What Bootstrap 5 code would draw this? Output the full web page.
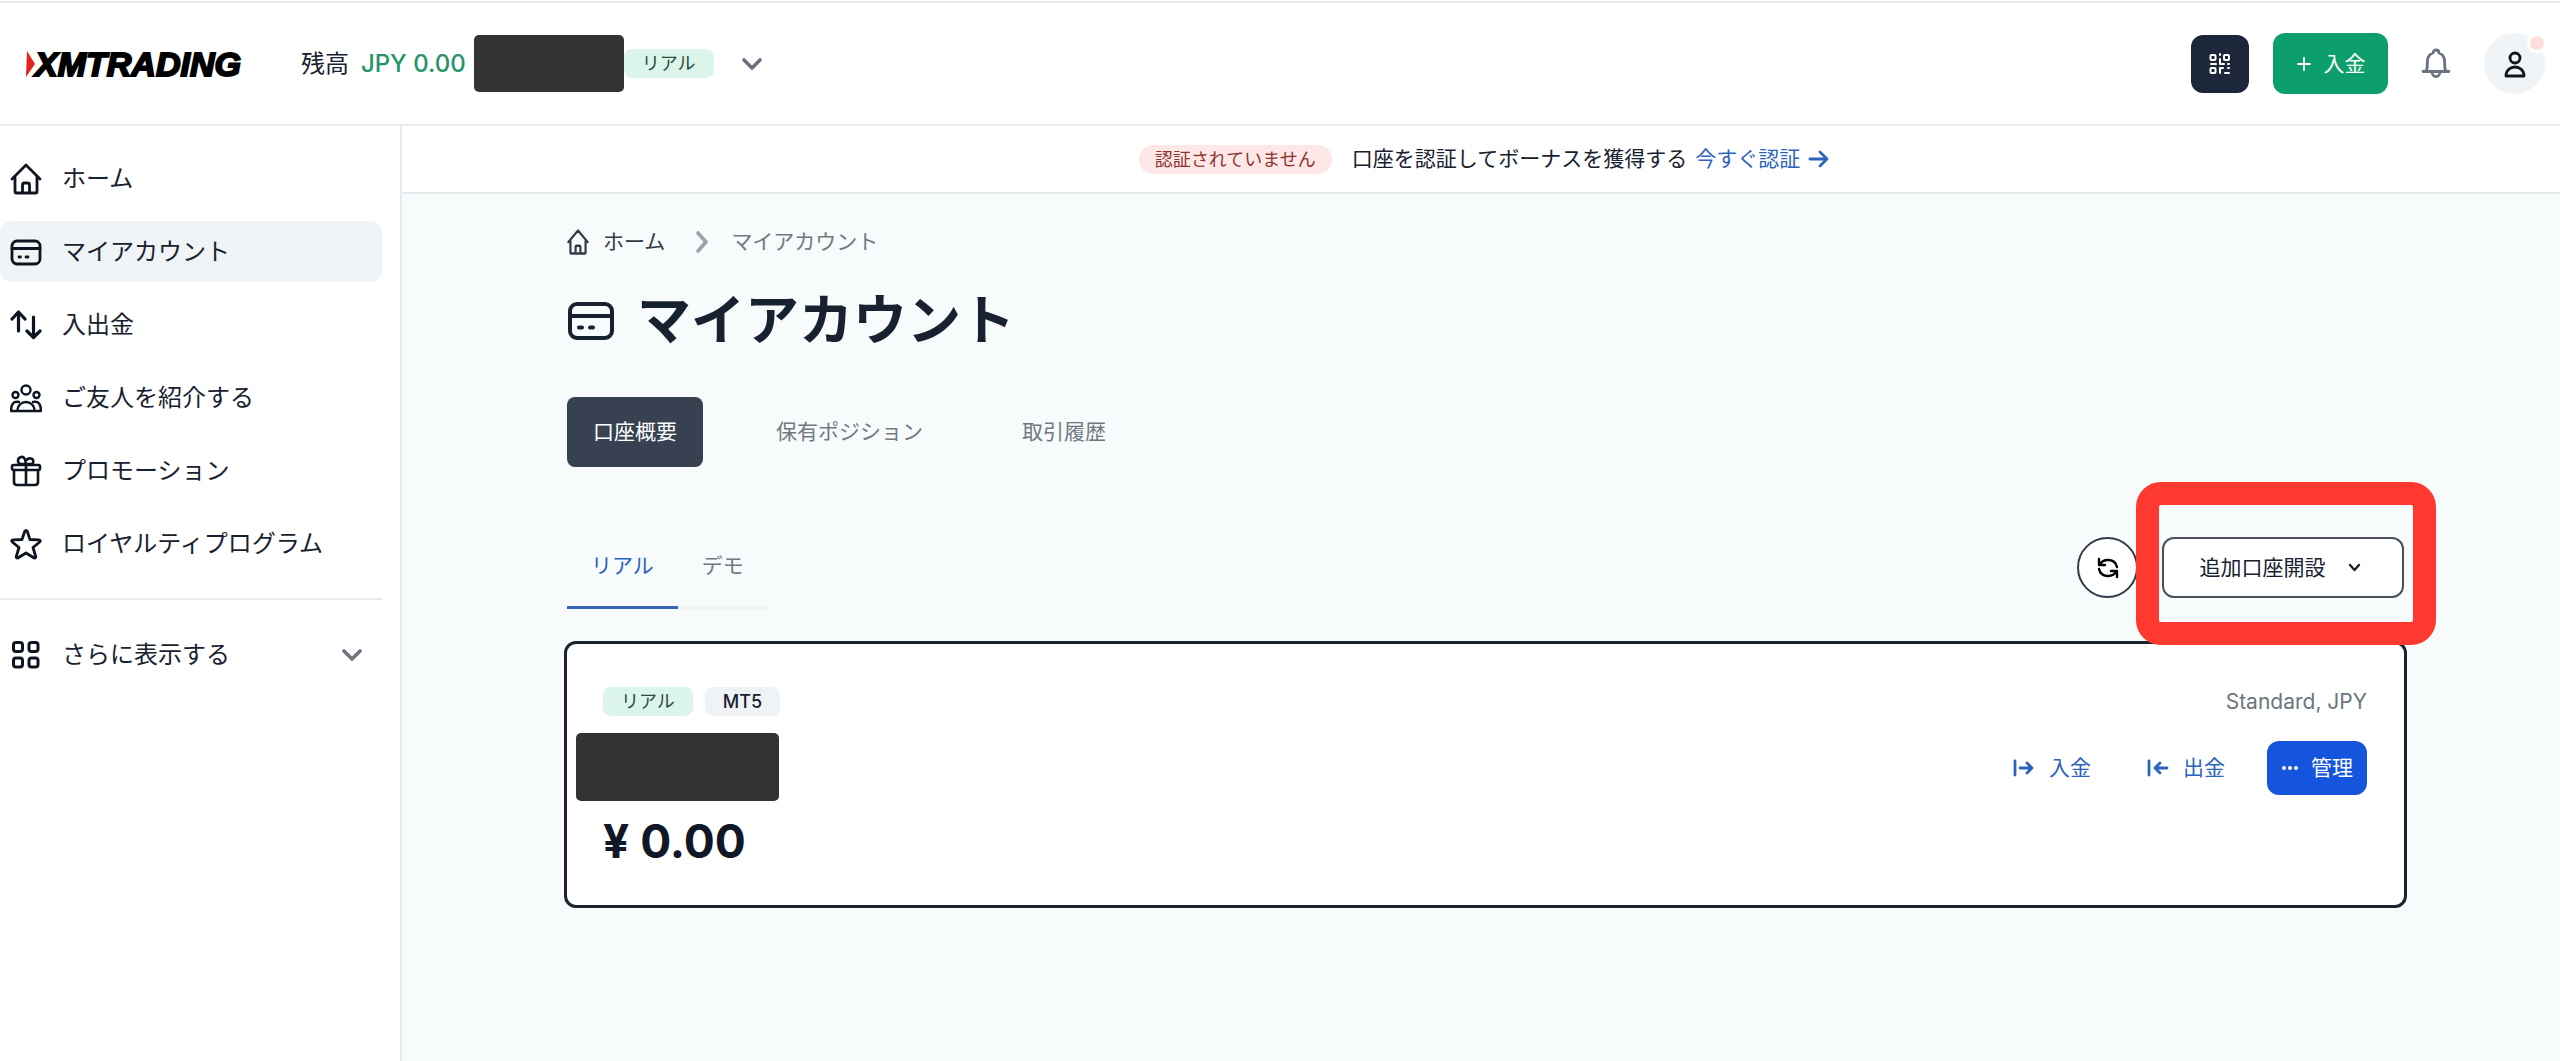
<!DOCTYPE html>
<html lang="ja">
<head>
<meta charset="utf-8">
<meta name="viewport" content="width=device-width, initial-scale=1">
<title>マイアカウント | XMTRADING</title>
<link href="https://cdn.jsdelivr.net/npm/bootstrap@5.3.0/dist/css/bootstrap.min.css" rel="stylesheet">
<style>
:root{--ink:#18212f;--muted:#73787f;--line:#e9ecee;--link:#2c63bd}
body{font-family:Inter,"Noto Sans CJK JP",sans-serif;font-size:21px;line-height:30px;color:var(--ink);background:#f7fbfc;min-height:100vh}
svg{display:block;flex:none;fill:none;stroke:currentColor;stroke-linecap:round;stroke-linejoin:round}
a{text-decoration:none;color:inherit}
.topbar{margin-top:1px;border-top:2px solid var(--line);border-bottom:2px solid var(--line);height:125px;padding:0 15px 0 26px}
.brand-name{font-family:"Liberation Sans",Arial,sans-serif;font-weight:700;font-style:italic;font-size:34px;line-height:40px;color:#000;-webkit-text-stroke:2px #000}
.balance{font-size:24px;line-height:32px;padding-left:12px}
.balance-sum{color:#259468;font-weight:500}
.hidden-id{background:#333;border-radius:5px;width:150px;height:57px}
.hidden-id.wide{width:203px;height:68px}
.tag{font-size:18px;line-height:29px;border-radius:8px;padding:0 18px}
.tag-real{background:#dcf5ea;color:#2d4a40}
.tag-grey{background:#f0f3f5;color:var(--ink);font-weight:500}
.qr-btn{width:58px;height:58px;border-radius:12px;background:#1c2739;color:#fff}
.deposit-btn{width:115px;height:61px;border-radius:12px;background:#0d9f6b;color:#fff}
.plain-btn{background:none;border:0;padding:0;color:#6b7280}
.avatar{width:61px;height:61px;background:#f1f4f6;color:#0e1520}
.avatar-dot{width:20px;height:20px;background:#fde0dc;border:3px solid #fff;top:0;right:-2px}
.sidebar{width:402px;border-right:2px solid var(--line);padding:22px 18px 0 0}
.sidebar .nav{gap:12px}
.side-item{height:61px;padding:0 20px 0 10px;gap:20px;font-size:24px;line-height:32px;border-radius:12px;color:var(--ink);width:100%;background:none;border:0;text-align:left}
.side-item svg{color:#0e1520}
.side-item .grey-icon,.crumbs .grey-icon{color:#6b7280}
.crumbs .grey-icon{color:#9da2a8}
.side-item.active{background:#f0f4f6}
.side-rule{border-top:2px solid var(--line);opacity:1;margin:24px 0}
.verify{height:68px;border-bottom:2px solid var(--line);padding-left:6px}
.verify .tag{background:#fde8e7;color:#8d3430;border-radius:15px;padding:0 16px}
.link-blue{color:var(--link)}
.page{padding:33px 153px 40px 162px}
.crumbs{gap:14px;padding-left:3px;color:var(--muted)}
.crumbs a{gap:14px;color:#333b48}
.page-title{gap:22px;margin-top:32px;padding-left:3px}
.page-title h1{font-size:54px;line-height:64px;font-weight:700}
.main-tabs{gap:47px;margin-top:44px;padding-left:3px}
.main-tabs .btn{font-size:21px;line-height:30px;height:70px;padding:0 26px;border-radius:8px;color:var(--muted);border:0}
.main-tabs .btn.active{background:#384152;color:#fff}
.tools{margin-top:70px;padding:0 3px}
.sub-tabs .btn{font-size:21px;line-height:30px;height:72px;padding:0 24px 12px;border:0;border-bottom:3px solid #f0f3f5;border-radius:0;color:var(--muted)}
.sub-tabs .btn.active{color:var(--link);border-color:#3763b8}
.refresh{width:61px;height:61px;border:2px solid #333b48;background:#fff}
.open-btn{width:242px;height:61px;border:2px solid #4a505a;border-radius:12px;background:#fff;font-size:21px;line-height:30px;gap:22px;padding:0 12px 0 6px;color:var(--ink)}
.focus-frame{border:23px solid #fe3a30;border-radius:25px;top:-55px;bottom:-47px;left:-26px;right:-32px;pointer-events:none;z-index:2}
.acct{border:3px solid #1b2330;border-radius:12px;margin-top:32px;padding:43px 37px 36px 36px;background:#fff}
.acct .hidden-id{margin:17px 0 12px -27px}
.acct-sum{font-size:46px;line-height:56px;font-weight:700;color:#101827}
.acct-actions{margin-top:24px;gap:42px}
.acct-actions .deposit-link{margin-right:14px}
.manage-btn{background:#1554dc;color:#fff;width:100px;height:54px;border-radius:12px}
.icon-text{font-size:21px;line-height:30px;gap:14px;border:0;padding:0}
.deposit-btn,.manage-btn{gap:12px}
</style>
</head>
<body class="d-flex flex-column">
<header class="topbar d-flex align-items-center justify-content-between bg-white">
  <div class="d-flex align-items-center">
    <a href="#" class="d-flex align-items-center">
      <svg width="9" height="28" viewBox="0 0 9 28"><path d="M1 1L9 14L0 27Z" fill="#e2231f" stroke="none"/></svg>
      <span class="brand-name">XMTRADING</span>
    </a>
    <div class="balance d-flex align-items-center ms-5">
      <span class="me-2">残高</span>
      <span class="balance-sum ms-1 me-2">JPY 0.00</span>
      <span class="hidden-id"></span>
      <span class="tag tag-real">リアル</span>
      <button type="button" class="plain-btn ms-4" aria-label="口座を選択"><svg width="28" height="28" viewBox="0 0 28 28" stroke-width="3.600"><path d="M6 10l8 8l8-8"/></svg></button>
    </div>
  </div>
  <div class="d-flex align-items-center">
    <button type="button" class="btn qr-btn p-0 d-flex align-items-center justify-content-center" aria-label="QR">
      <svg width="22" height="22" viewBox="0 0 22 22" stroke-width="2"><rect x="1.500" y="2" width="5" height="5" rx="1"/><rect x="15" y="2" width="5" height="5" rx="1"/><rect x="1.500" y="15" width="5" height="5" rx="1"/><path d="M11 1v1M11 6v5h4M2 11h5M19 11h1M11 20v-5h3M19 15h1M16 20h4"/></svg>
    </button>
    <button type="button" class="btn deposit-btn icon-text d-flex align-items-center justify-content-center ms-4">
      <svg width="16" height="16" viewBox="0 0 16 16" stroke-width="2"><path d="M8 2v12M2 8h12"/></svg>入金
    </button>
    <button type="button" class="plain-btn ms-4 px-2" aria-label="通知">
      <svg width="32" height="34" viewBox="0 0 32 34" stroke-width="2.800"><path d="M3 24.500H29M6 24c2-3 1-7 1.500-11C8 9 10 7 13 6C13 2 19 2 19 6C22 7 24 9 24.500 13C25 17 24 21 26 24M12 25c0 6 8 6 8 0"/></svg>
    </button>
    <button type="button" class="plain-btn avatar rounded-circle position-relative d-flex align-items-center justify-content-center ms-4" aria-label="プロフィール">
      <svg width="24" height="30" viewBox="0 0 24 30" stroke-width="2.800"><circle cx="12" cy="9" r="5"/><path d="M3 27c0-12 18-12 18 0z"/></svg>
      <span class="avatar-dot position-absolute rounded-circle"></span>
    </button>
  </div>
</header>

<div class="d-flex flex-grow-1">
  <aside class="sidebar bg-white flex-shrink-0">
    <nav class="nav flex-column">
      <a href="#" class="side-item d-flex align-items-center">
        <svg width="32" height="32" viewBox="0 0 32 32" stroke-width="2.800"><path d="M2 16L16 2L30 16M5 14v15q0 1 1 1h20q1 0 1-1V14M12.500 30v-8q0-2 2-2h3q2 0 2 2v8"/></svg>ホーム</a>
      <a href="#" class="side-item active d-flex align-items-center" aria-current="page">
        <svg width="32" height="32" viewBox="0 0 32 32" stroke-width="2.800"><rect x="2" y="5" width="28" height="23" rx="5"/><path d="M2 12.500h28M9 21h1.500M16 21h2"/></svg>マイアカウント</a>
      <a href="#" class="side-item d-flex align-items-center">
        <svg width="32" height="32" viewBox="0 0 32 32" stroke-width="3.200"><path d="M8.500 22V4M2 10l6.500-7L15 10M23.500 8v20M17 22l6.500 6.500L30 22"/></svg>入出金</a>
      <a href="#" class="side-item d-flex align-items-center">
        <svg width="32" height="32" viewBox="0 0 32 32" stroke-width="2.400"><circle cx="16" cy="8" r="4.500"/><circle cx="5.500" cy="13" r="3"/><circle cx="26.500" cy="13" r="3"/><path d="M7.500 29c0-12 17-12 17 0zM9 20C3 18.500 1 23 1 29h6M23 20c6-1.500 8 3 8 9h-6"/></svg>ご友人を紹介する</a>
      <a href="#" class="side-item d-flex align-items-center">
        <svg width="32" height="32" viewBox="0 0 32 32" stroke-width="2.600"><rect x="2" y="10" width="28" height="5" rx="1.500"/><path d="M4 15v12q0 3 3 3h18q3 0 3-3V15M16 9v21M15.500 9H11c-4 0-4-6 0-7c3-1 5 3 4.500 7zM16 9h5c3 0 3-5 0-5.500c-2-.5-4 .5-5 2"/></svg>プロモーション</a>
      <a href="#" class="side-item d-flex align-items-center">
        <svg width="32" height="32" viewBox="0 0 32 32" stroke-width="2.800"><path d="M16 2.500c.7 0 1 .5 1.300 1L20 11.500l9 .3c1.300 0 1.700 1.400.7 2.200L23 19.500l2.700 9c.3 1.300-.8 2-1.900 1.300L16 25l-7.800 4.800c-1.100.7-2.200 0-1.900-1.300l2.700-9L2.300 14c-1-.8-.6-2.200.7-2.200l9-.3L14.700 3.500c.3-.5.600-1 1.300-1z"/></svg>ロイヤルティプログラム</a>
    </nav>
    <hr class="side-rule">
    <button type="button" class="side-item d-flex align-items-center">
      <svg width="32" height="32" viewBox="0 0 32 32" stroke-width="3"><rect x="3.500" y="3.500" width="9" height="9" rx="2.500"/><rect x="19" y="3.500" width="9" height="9" rx="2.500"/><rect x="3.500" y="19" width="9" height="9" rx="2.500"/><rect x="19" y="19" width="9" height="9" rx="2.500"/></svg>さらに表示する
      <svg class="grey-icon ms-auto" width="20" height="20" viewBox="0 0 20 20" stroke-width="3.600"><path d="M2 6l8 8l8-8"/></svg>
    </button>
  </aside>

  <main class="flex-grow-1">
    <div class="verify bg-white d-flex align-items-center justify-content-center">
      <span class="tag">認証されていません</span>
      <span class="ms-3 me-2 ps-1">口座を認証してボーナスを獲得する</span>
      <a href="#" class="link-blue d-flex align-items-center gap-2">今すぐ認証
        <svg width="21" height="20" viewBox="0 0 21 20" stroke-width="2.800"><path d="M2 10h17M12 3l7 7l-7 7"/></svg></a>
    </div>

    <div class="page">
      <nav class="crumbs d-flex align-items-center" aria-label="パンくず">
        <a href="#" class="d-flex align-items-center">
          <svg width="22" height="26" viewBox="0 0 32 34" preserveAspectRatio="none" stroke-width="3.200"><path d="M2 17L16 2L30 17M5 15v16q0 1 1 1h20q1 0 1-1V15M12.500 32v-8q0-2 2-2h3q2 0 2 2v8"/></svg>ホーム</a>
        <svg class="grey-icon ms-3 me-2" width="14" height="22" viewBox="0 0 14 22" stroke-width="3.600"><path d="M3 2l8 9l-8 9"/></svg>
        <span>マイアカウント</span>
      </nav>

      <div class="page-title d-flex align-items-center">
        <svg width="48" height="40" viewBox="0 0 48 40" stroke-width="4"><rect x="3" y="3" width="42" height="34" rx="7"/><path d="M3 15h42M12 26.500h3M23 26.500h3"/></svg>
        <h1 class="mb-0">マイアカウント</h1>
      </div>

      <div class="main-tabs d-flex">
        <button type="button" class="btn active">口座概要</button>
        <button type="button" class="btn">保有ポジション</button>
        <button type="button" class="btn">取引履歴</button>
      </div>

      <div class="tools d-flex justify-content-between align-items-start">
        <div class="sub-tabs d-flex">
          <button type="button" class="btn active">リアル</button>
          <button type="button" class="btn">デモ</button>
        </div>
        <div class="d-flex gap-4">
          <button type="button" class="refresh rounded-circle d-flex align-items-center justify-content-center p-0" aria-label="更新">
            <svg width="22" height="22" viewBox="0 0 22 22" stroke-width="2.400"><path d="M2 2v6h6M2.500 8C6 1 18 1 20 10M20 20v-6h-6M19.500 14C16 21 4 21 2 12"/></svg>
          </button>
          <div class="position-relative">
            <button type="button" class="open-btn d-flex align-items-center justify-content-center">追加口座開設
              <svg width="13" height="10" viewBox="0 0 13 10" stroke-width="2.400"><path d="M2 2l4.500 5L11 2"/></svg></button>
            <div class="focus-frame position-absolute"></div>
          </div>
        </div>
      </div>

      <section class="acct d-flex justify-content-between">
        <div>
          <div class="d-flex gap-2">
            <span class="tag tag-real">リアル</span>
            <span class="tag tag-grey ms-1">MT5</span>
          </div>
          <div class="hidden-id wide"></div>
          <div class="acct-sum">¥ 0.00</div>
        </div>
        <div class="d-flex flex-column align-items-end">
          <span class="text-secondary">Standard, JPY</span>
          <div class="acct-actions d-flex align-items-center">
            <a href="#" class="icon-text link-blue deposit-link d-flex align-items-center">
              <svg width="22" height="18" viewBox="0 0 22 18" stroke-width="2.800"><path d="M2 2v14M7 9h12M14 4l5 5l-5 5"/></svg>入金</a>
            <a href="#" class="icon-text link-blue d-flex align-items-center">
              <svg width="22" height="18" viewBox="0 0 22 18" stroke-width="2.800"><path d="M2 2v14M20 9H8M13 4L8 9l5 5"/></svg>出金</a>
            <button type="button" class="btn manage-btn icon-text d-flex align-items-center justify-content-center">
              <svg width="18" height="6" viewBox="0 0 18 6"><g fill="#fff" stroke="none"><circle cx="3" cy="3" r="2"/><circle cx="9" cy="3" r="2"/><circle cx="15" cy="3" r="2"/></g></svg>管理
            </button>
          </div>
        </div>
      </section>
    </div>
  </main>
</div>
<script src="https://cdn.jsdelivr.net/npm/bootstrap@5.3.0/dist/js/bootstrap.bundle.min.js"></script>
</body>
</html>
